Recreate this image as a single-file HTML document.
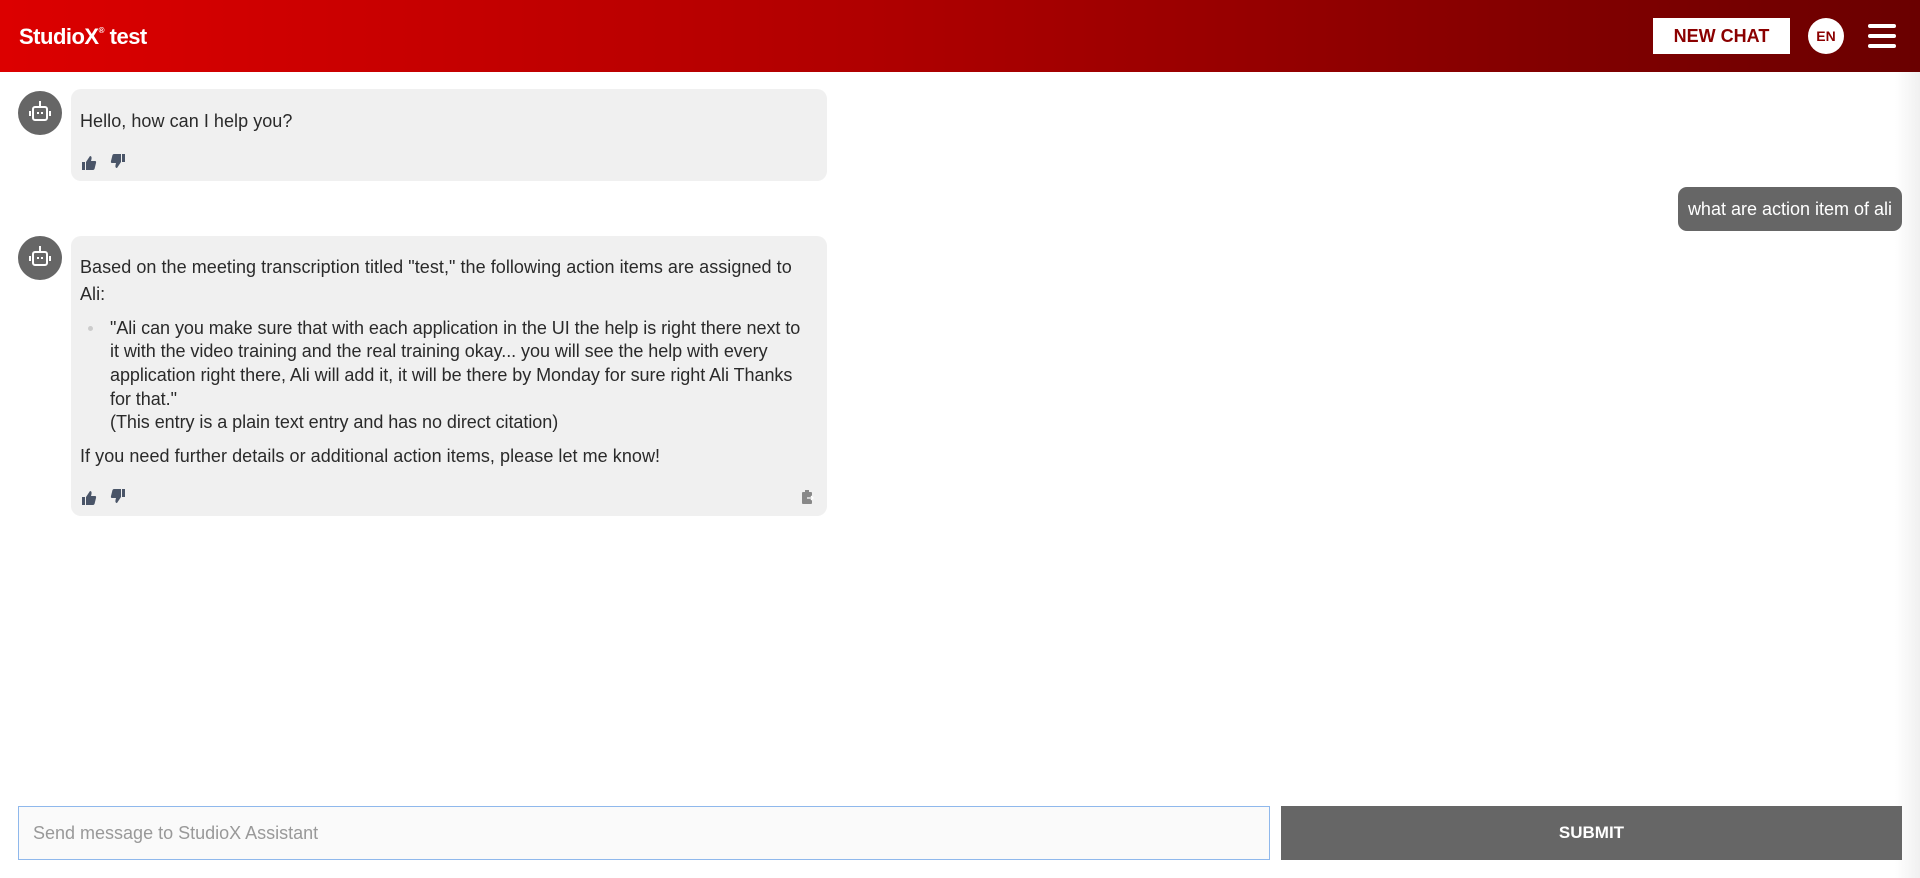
<!DOCTYPE html>
<html><head><meta charset="utf-8"><style>
*{box-sizing:border-box;margin:0;padding:0}
body{width:1920px;height:878px;overflow:hidden;background:#fff;font-family:"Liberation Sans",sans-serif;color:#222;position:relative}
.hdr{position:absolute;left:0;top:0;width:1920px;height:72px;background:linear-gradient(90deg,#dc0000 0%,#b00000 45%,#6a0000 100%)}
.logo{position:absolute;left:19px;top:24px;color:#fff;font-weight:bold;font-size:22px;letter-spacing:-0.5px}
.logo sup{font-size:8px;vertical-align:top;position:relative;top:2px}
.nc{position:absolute;left:1653px;top:18px;width:137px;height:36px;background:#fff;color:#8b0000;font-weight:bold;font-size:18px;text-align:center;line-height:36px}
.en{position:absolute;left:1808px;top:18px;width:36px;height:36px;border-radius:50%;background:#fff;color:#8b0000;font-weight:bold;font-size:14px;text-align:center;line-height:37px}
.hb{position:absolute;left:1868px;top:24px;width:28px;height:4px;background:#fff;border-radius:2px}
.av{position:absolute;width:44px;height:44px;border-radius:50%;background:#666}
.av svg{position:absolute;left:10px;top:9px}
.bub{position:absolute;left:71px;width:756px;background:#f0f0f0;border-radius:10px}
.t{position:absolute;left:80px;font-size:18px;white-space:nowrap;color:#2a2a2a;letter-spacing:0.05px}
.q{left:110px;letter-spacing:-0.05px}
.ic{position:absolute}
.user{position:absolute;left:1678px;top:187px;width:224px;height:44px;background:#666;border-radius:9px;color:#fff;font-size:18px;line-height:44px;text-align:center}
.inp{position:absolute;left:18px;top:806px;width:1252px;height:54px;border:1px solid #8fb8ec;background:#fafafa;color:#999;font-size:18px;line-height:52px;padding-left:14px}
.sub{position:absolute;left:1281px;top:806px;width:621px;height:54px;background:#666;color:#fff;font-weight:bold;font-size:17px;text-align:center;line-height:54px}
.scr{position:absolute;left:1895px;top:72px;width:25px;height:806px;background:linear-gradient(90deg,#fff,#f0f0f0)}
</style></head><body>
<div class="hdr">
<div class="logo">StudioX<sup>®</sup> test</div>
<div class="nc">NEW CHAT</div>
<div class="en">EN</div>
<div class="hb"></div><div class="hb" style="top:34px"></div><div class="hb" style="top:44px"></div>
</div>
<div class="scr"></div>

<div class="av" style="left:18px;top:91px"><svg width="24" height="26" viewBox="0 0 24 26"><line x1="12" y1="1" x2="12" y2="6" stroke="#fff" stroke-width="2"/><rect x="5" y="7" width="14" height="13" rx="2" fill="none" stroke="#fff" stroke-width="2"/><rect x="9" y="12" width="2" height="2" fill="#fff"/><rect x="13" y="12" width="2" height="2" fill="#fff"/><line x1="2" y1="11" x2="2" y2="16" stroke="#fff" stroke-width="2"/><line x1="22" y1="11" x2="22" y2="16" stroke="#fff" stroke-width="2"/></svg></div>
<div class="bub" style="top:89px;height:92px"></div>
<div class="t" style="top:111px">Hello, how can I help you?</div>
<svg class="ic" style="left:81px;top:155px" width="16" height="16" viewBox="0 0 16 16"><rect x="1" y="7" width="3" height="8" fill="#4a5568"/><path d="M5 7 L9 1 Q11 1 10.5 4 L10 6 H14 Q15.5 6 15 8 L13.5 14 Q13 15 12 15 H5Z" fill="#4a5568"/></svg>
<svg class="ic" style="left:110px;top:153px" width="16" height="16" viewBox="0 0 16 16" transform="rotate(180)"><rect x="1" y="7" width="3" height="8" fill="#4a5568"/><path d="M5 7 L9 1 Q11 1 10.5 4 L10 6 H14 Q15.5 6 15 8 L13.5 14 Q13 15 12 15 H5Z" fill="#4a5568"/></svg>

<div class="user">what are action item of ali</div>

<div class="av" style="left:18px;top:236px"><svg width="24" height="26" viewBox="0 0 24 26"><line x1="12" y1="1" x2="12" y2="6" stroke="#fff" stroke-width="2"/><rect x="5" y="7" width="14" height="13" rx="2" fill="none" stroke="#fff" stroke-width="2"/><rect x="9" y="12" width="2" height="2" fill="#fff"/><rect x="13" y="12" width="2" height="2" fill="#fff"/><line x1="2" y1="11" x2="2" y2="16" stroke="#fff" stroke-width="2"/><line x1="22" y1="11" x2="22" y2="16" stroke="#fff" stroke-width="2"/></svg></div>
<div class="bub" style="top:236px;height:280px"></div>
<div class="t" style="top:257px">Based on the meeting transcription titled "test," the following action items are assigned to</div>
<div class="t" style="top:284px">Ali:</div>
<div style="position:absolute;left:88px;top:326px;width:5px;height:5px;border-radius:50%;background:#ccc"></div>
<div class="t q" style="top:318px">"Ali can you make sure that with each application in the UI the help is right there next to</div>
<div class="t q" style="top:341px">it with the video training and the real training okay... you will see the help with every</div>
<div class="t q" style="top:365px">application right there, Ali will add it, it will be there by Monday for sure right Ali Thanks</div>
<div class="t q" style="top:389px">for that."</div>
<div class="t q" style="top:412px">(This entry is a plain text entry and has no direct citation)</div>
<div class="t" style="top:446px">If you need further details or additional action items, please let me know!</div>
<svg class="ic" style="left:81px;top:490px" width="16" height="16" viewBox="0 0 16 16"><rect x="1" y="7" width="3" height="8" fill="#4a5568"/><path d="M5 7 L9 1 Q11 1 10.5 4 L10 6 H14 Q15.5 6 15 8 L13.5 14 Q13 15 12 15 H5Z" fill="#4a5568"/></svg>
<svg class="ic" style="left:110px;top:488px" width="16" height="16" viewBox="0 0 16 16" transform="rotate(180)"><rect x="1" y="7" width="3" height="8" fill="#4a5568"/><path d="M5 7 L9 1 Q11 1 10.5 4 L10 6 H14 Q15.5 6 15 8 L13.5 14 Q13 15 12 15 H5Z" fill="#4a5568"/></svg>
<svg class="ic" style="left:801px;top:490px" width="13" height="15" viewBox="0 0 13 15"><rect x="1" y="2" width="10" height="12" rx="1" fill="#888"/><rect x="4" y="0" width="4" height="3" fill="#888"/><path d="M6 8 H12 M10 6 L12 8 L10 10" stroke="#fff" stroke-width="1.3" fill="none"/></svg>

<div class="inp">Send message to StudioX Assistant</div>
<div class="sub">SUBMIT</div>
</body></html>
